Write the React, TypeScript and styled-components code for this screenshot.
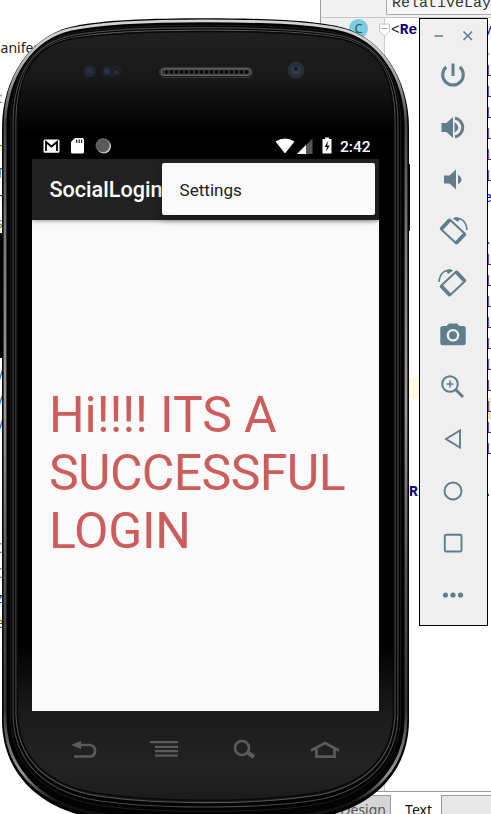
import React from "react";
import styled, { createGlobalStyle } from "styled-components";

const Global = createGlobalStyle`
  * { box-sizing: border-box; }
  body { margin: 0; background: #fff; overflow: hidden; }
`;

const slate = "#607d8b";

const Desktop = styled.div`
  position: relative;
  width: 491px;
  height: 814px;
  overflow: hidden;
  background: #fff;
`;

/* ---------- IDE behind the emulator ---------- */
const Ide = styled.div`
  display: flex;
  height: 814px;
`;

const ProjectPane = styled.div`
  width: 320px;
  height: 814px;
  overflow: hidden;
  display: flex;
  flex-direction: column;
  font: 14px/20px "Noto Sans", sans-serif;
  color: #222;
`;

const TreeLabel = styled.div`
  margin: 38px 0 0 -3px;
  height: 20px;
`;

const Fragments = styled.div`
  margin-top: 30px;
  width: 3px;
  height: 690px;
  overflow: hidden;
  display: flex;
  flex-direction: column;
`;

const Fragment = styled.span<{ $gap: number; $c: string }>`
  margin: ${(p) => p.$gap}px 0 0 -4px;
  height: 20px;
  color: ${(p) => p.$c};
  flex: none;
`;

const DarkEdge = styled.div`
  height: 125px;
  background: #000;
  flex: none;
`;

const Editor = styled.div`
  width: 171px;
  height: 814px;
  display: flex;
  flex-direction: column;
  font-family: "Liberation Mono", monospace;
`;

const Crumbs = styled.div`
  height: 18px;
  flex: none;
  display: flex;
  padding-left: 65px;
  background: #f2f2f2;
  border-left: 1px solid #999;
  border-bottom: 1px solid #c6c6c6;
`;

const Crumb = styled.div`
  flex: 1;
  height: 19px;
  margin-top: -4px;
  overflow: hidden;
  padding-left: 5px;
  background: #f7f7f7;
  border: 1px solid #aaa;
  border-top: 0;
  border-right: 0;
  border-radius: 0 0 0 2px;
  font-size: 15px;
  line-height: 15px;
  color: #333;
  white-space: nowrap;
`;

const CodeArea = styled.div`
  height: 773px;
  flex: none;
  display: flex;
`;

const Gutter = styled.div`
  width: 65px;
  display: flex;
  padding: 1px 0 0 28px;
  background: #f0f0f0;
  border-left: 1px solid #999;
  border-right: 1px solid #ccc;
`;

const ClassBadge = styled.div`
  width: 19px;
  height: 19px;
  border-radius: 50%;
  background: #7ccbe4;
  color: #35505a;
  font: 13px/19px "Noto Sans", sans-serif;
  text-align: center;
`;

const Code = styled.div`
  flex: 1;
  display: flex;
  flex-direction: column;
  padding-top: 2px;
  overflow: hidden;
`;

const Line = styled.div<{ $bg?: string; $first?: boolean }>`
  height: 21px;
  flex: none;
  display: flex;
  justify-content: space-between;
  padding-left: ${(p) => (p.$first ? 6 : 24)}px;
  background: ${(p) => p.$bg || "transparent"};
  color: #000080;
  font-size: 14.5px;
  font-weight: bold;
  line-height: 21px;
`;

const Tail = styled.span<{ $c: string }>`
  width: 4px;
  overflow: hidden;
  text-indent: -3.5px;
  color: ${(p) => p.$c};
  font-weight: normal;
`;

const Tag = styled.span`
  span { color: #222; font-weight: normal; }
`;

const FoldOverlay = styled.svg`
  position: absolute;
  left: 379px;
  top: 23px;
  width: 12px;
  height: 14px;
`;

const ModeTabs = styled.div`
  height: 23px;
  flex: none;
  display: flex;
  border-top: 1px solid #999;
  padding-top: 3px;
  background: #fff;
`;

const ModeTab = styled.div<{ $w: number; $on?: boolean }>`
  width: ${(p) => p.$w}px;
  height: 24px;
  padding-right: ${(p) => (p.$on ? 9 : 4)}px;
  text-align: right;
  font: 14px/${(p) => (p.$on ? 29 : 27)}px "Noto Sans", sans-serif;
  color: ${(p) => (p.$on ? "#111" : "#555")};
  background: ${(p) => (p.$on ? "#fff" : "#d5d5d5")};
  border-top: ${(p) => (p.$on ? "0" : "1px solid #999")};
  border-right: ${(p) => (p.$on ? "0" : "1px solid #999")};
`;

const TabRest = styled.div`
  flex: 1;
  background: #e7e7e7;
  border-top: 1px solid #999;
  border-left: 1px solid #999;
`;

/* ---------- Emulator device ---------- */
const Device = styled.div`
  position: absolute;
  left: 0;
  top: 0;
  width: 412px;
  height: 814px;
  padding: 133px 33px 0 32px;
`;

const Bezel = styled.svg`
  position: absolute;
  left: 0;
  top: 0;
`;

const Screen = styled.div`
  position: relative;
  width: 347px;
  height: 578px;
  background: #fafafa;
  font-family: Roboto, sans-serif;
  overflow: hidden;
`;

const StatusBar = styled.div`
  height: 26px;
  display: flex;
  align-items: center;
  justify-content: space-between;
  padding: 0 9px 0 11px;
  background: #000;
`;

const AppBar = styled.div`
  height: 61px;
  padding-left: 17.5px;
  background: #212121;
  color: #fff;
  font-size: 21.6px;
  font-weight: 500;
  line-height: 62px;
  box-shadow: 0 1px 4px rgba(0, 0, 0, 0.4);
`;

const Popup = styled.div`
  position: absolute;
  left: 130px;
  top: 30px;
  width: 213px;
  height: 52px;
  padding-left: 17.5px;
  background: #fafafa;
  border-radius: 2px;
  box-shadow: 0 4px 9px rgba(0, 0, 0, 0.35);
  color: #212121;
  font-size: 17.1px;
  line-height: 54px;
`;

const Message = styled.p`
  display: flex;
  flex-direction: column;
  margin: 166px 0 0 17px;
  color: #cd5c5c;
  font-size: 50px;
  line-height: 58px;
  white-space: pre;
`;

const MessageLine = styled.span<{ $track: number }>`
  letter-spacing: ${(p) => p.$track}px;
`;

/* ---------- Emulator tool strip ---------- */
const Tools = styled.div`
  position: absolute;
  left: 419px;
  top: 18px;
  width: 69px;
  height: 608px;
  background: #efefef;
  border: 1px solid #000;
`;

const WindowButtons = styled.div`
  height: 30px;
  display: flex;
  justify-content: space-between;
  align-items: center;
  padding: 3px 13.5px 0 14px;
`;

const ToolList = styled.div`
  display: flex;
  flex-direction: column;
  align-items: center;
  padding-right: 2px;
`;

const Tool = styled.div`
  width: 32px;
  height: 52px;
  display: flex;
  align-items: center;
  justify-content: center;
`;

/* Contours of the casing: blend from the outer edge (0) to the glass edge (1). */
const outerCurve = [205, 18.3, 150, 18.3, 100, 20, 70, 27, 30, 37, 2, 78, 2, 128, 2, 720, 2, 770, 35, 803, 80, 815, 110, 823, 150, 824, 205, 824];
const innerCurve = [205, 31, 160, 31, 110, 32, 75, 38, 36, 44, 17.5, 70, 17, 120, 17, 715, 19, 765, 55, 785, 90, 793, 125, 799, 160, 801, 205, 801];

const contour = (t: number) => {
  const v = outerCurve.map((o, i) => +(o + (innerCurve[i] - o) * t).toFixed(2));
  const pts: string[] = [];
  const mir: string[] = [];
  for (let i = 0; i < v.length; i += 2) {
    pts.push(`${v[i]} ${v[i + 1]}`);
    mir.push(`${411 - v[i]} ${v[i + 1]}`);
  }
  const m = mir.reverse();
  return `M${pts[0]}C${pts.slice(1, 7).join(" ")}L${pts[7]}C${pts.slice(8).join(" ")}L${m[0]}C${m.slice(1, 7).join(" ")}L${m[7]}C${m.slice(8).join(" ")}Z`;
};

const DeviceArt = () => (
  <Bezel width="412" height="814" viewBox="0 0 412 814">
    <defs>
      <linearGradient id="rim" x1="0" y1="0" x2="0" y2="814" gradientUnits="userSpaceOnUse">
        <stop offset="0" stopColor="#ddd" />
        <stop offset=".05" stopColor="#ccc" />
        <stop offset=".1" stopColor="#999" />
        <stop offset=".15" stopColor="#444" />
        <stop offset=".28" stopColor="#777" />
        <stop offset=".5" stopColor="#999" />
        <stop offset=".7" stopColor="#555" />
        <stop offset=".87" stopColor="#333" />
        <stop offset=".95" stopColor="#999" />
        <stop offset=".985" stopColor="#111" />
      </linearGradient>
      <linearGradient id="face" x1="0" y1="32" x2="0" y2="814" gradientUnits="userSpaceOnUse">
        <stop offset="0" stopColor="#202020" />
        <stop offset=".06" stopColor="#181818" />
        <stop offset=".13" stopColor="#000" />
        <stop offset=".78" stopColor="#000" />
        <stop offset=".87" stopColor="#1b1b1b" />
        <stop offset=".94" stopColor="#232323" />
        <stop offset="1" stopColor="#181818" />
      </linearGradient>
      <pattern id="mesh" width="5" height="5" patternUnits="userSpaceOnUse" x="164" y="69.5">
        <circle cx="2.5" cy="2.5" r="1.8" fill="#000" />
      </pattern>
    </defs>
    <rect x="405" y="164" width="5" height="67" rx="1" fill="#050505" />
    <path d={contour(0)} fill="#030303" />
    <path d={contour(0.2)} fill="none" stroke="url(#rim)" strokeWidth="2.8" />
    <path d={contour(0.56)} fill="none" stroke="#1c1c1c" strokeWidth="1" />
    <path d={contour(0.74)} fill="none" stroke="#484848" strokeWidth="1.2" />
    <path d={contour(0.93)} fill="url(#face)" stroke="#555" strokeWidth="1.1" />
    <path d={contour(1.03)} fill="none" stroke="#080808" strokeWidth="1.5" />
    <circle cx="89.5" cy="71" r="6" fill="#25262e" />
    <circle cx="89.5" cy="71" r="2.500" fill="#26304a" />
    <rect x="101.5" y="65.5" width="20" height="11" rx="5.5" fill="#202128" />
    <circle cx="107" cy="71" r="3" fill="#263250" />
    <circle cx="116.5" cy="72" r="1.5" fill="#303748" />
    <rect x="159.5" y="67.5" width="93" height="10" rx="4.5" fill="#1b1b1b" stroke="#373737" strokeWidth="1" />
    <rect x="161" y="68.8" width="90" height="6.5" rx="3" fill="#393939" stroke="#777" strokeWidth="1" />
    <rect x="163" y="69.5" width="86" height="5" fill="url(#mesh)" />
    <circle cx="296" cy="70" r="8.5" fill="#292d34" />
    <circle cx="296" cy="70" r="5" fill="#333946" />
    <circle cx="296" cy="68.5" r="2.2" fill="#1d222d" />
    <g fill="none" stroke="#5b5b5b" strokeWidth="2.7">
      <path d="M79 745H90Q95 746 95 750.5Q95 756.5 90 756.500H74" />
      <path d="M71 745L81 741V749Z" fill="#5b5b5b" stroke="none" />
      <path d="M150 742.2H178M155 746.8H178M155 751.2H178M155 755.6H178" strokeWidth="2.3" />
      <circle cx="242" cy="748" r="7" />
      <path d="M247 752L254 757" strokeWidth="4.5" />
      <path d="M311 750.5L325 743L339 750.5M316.5 749V756.7H334.5V749" />
    </g>
  </Bezel>
);

const StatusLeft = () => (
  <svg width="72" height="20" viewBox="43 136 72 20">
    <rect x="43.5" y="139.5" width="16" height="13.2" rx="1.5" fill="#fff" />
    <path d="M46 151V142L51.5 146.5L57 142V151" fill="none" stroke="#000" strokeWidth="1.8" />
    <path d="M75 138H82.500Q84 138 84 139.500V152Q84 153.500 82.500 153.500H72.500Q71 153.500 71 152V142Z" fill="#fff" />
    <path d="M76.7 139.5V143M79.2 139.5V143M81.6 139.5V143" stroke="#222" strokeWidth="1.2" />
    <circle cx="103.8" cy="146.3" r="7.2" fill="#ccc" />
    <circle cx="102.8" cy="145.4" r="6.800" fill="#5b5b5b" stroke="#8a8a8a" strokeDasharray="1 1" />
  </svg>
);

const StatusRight = () => (
  <svg width="95" height="20" viewBox="275 136 95 20">
    <path d="M275.5 141.5Q285 135.5 294.5 141.5L285 153.5Z" fill="#fff" />
    <path d="M297 154L312.5 138.5V154Z" fill="#555" />
    <path d="M297 154L306 145V154Z" fill="#fff" />
    <path d="M322.5 139H325V137.5H329V139H331.5V153.5H322.5Z" fill="#fff" />
    <path d="M328 141L324.5 147H327L326 151.5L329.7 145.5H327.2Z" fill="#000" />
    <text x="340" y="152" fill="#fff" fontFamily="Roboto, sans-serif" fontSize="15.5" fontWeight="500">2:42</text>
  </svg>
);

const Rotated = () => (
  <>
    <g transform="rotate(43 16 16.5)">
      <rect x="3.8" y="9" width="24.4" height="15" rx="2" fill={slate} />
      <rect x="7.6" y="11" width="16.8" height="11" fill="#efefef" />
    </g>
    <path d="M18 3Q29 3 30 15" fill="none" stroke={slate} strokeWidth="1.6" />
    <path d="M15.5 3.2Q19 1.5 23 3.4L21 7Z" fill={slate} />
  </>
);

const icons: React.ReactNode[] = [
  <g fill="none" stroke={slate} strokeWidth="3"><path d="M9.2 8A10.3 10.3 0 1 0 22.8 8M16 4.5V17" /></g>,
  <g><path d="M4.5 12H9.500L16 6V27L9.500 21H4.500Z" fill={slate} /><path d="M17.500 11Q25 16.500 17.500 22Z" fill={slate} /><path d="M18 7A9.700 9.700 0 0 1 18 26" fill="none" stroke={slate} strokeWidth="3" /></g>,
  <g fill={slate}><path d="M7 12.5H12.5L19 6.5V26.5L12.5 20.5H7Z" /><path d="M21 11.5Q28 16.5 21 21.5Z" /></g>,
  <Rotated />,
  <g transform="matrix(-1 0 0 1 32 0)"><Rotated /></g>,
  <g><path d="M5.5 7H9.5L12 4.500H20L22.500 7H26.500Q28.700 7 28.700 9V24Q28.700 26.200 26.500 26.200H5.500Q3.300 26.200 3.300 24V9Q3.300 7 5.500 7Z" fill={slate} /><circle cx="16" cy="16.2" r="6.3" fill="#efefef" /><circle cx="16" cy="16.2" r="4" fill={slate} /></g>,
  <g fill="none" stroke={slate} strokeWidth="2"><circle cx="13" cy="13" r="7.8" /><path d="M9.500 13H16.500M13 9.500V16.500" strokeWidth="1.5" /><path d="M18.5 18.500L26 26" strokeWidth="3" /></g>,
  <path d="M23 7.5V24.5L9 16Z" fill="none" stroke={slate} strokeWidth="1.9" />,
  <circle cx="16" cy="16" r="8.5" fill="none" stroke={slate} strokeWidth="1.9" />,
  <rect x="7.8" y="7.8" width="16.7" height="16.7" rx="1.3" fill="none" stroke={slate} strokeWidth="1.9" />,
  <g fill={slate}><circle cx="8.5" cy="16" r="2.6" /><circle cx="16" cy="16" r="2.6" /><circle cx="23.5" cy="16" r="2.6" /></g>,
];

const attribute = { tail: "l", c: "#660e7a" };
const codeLines: { tail: string; c: string; bg?: string }[] = [
  { tail: ".", c: "#d06030" },
  ...Array.from({ length: 6 }, () => attribute),
  { tail: "e", c: "#0000ff" },
  { tail: "", c: "#000" },
  { tail: ".", c: "#000080" },
  ...Array.from({ length: 6 }, () => attribute),
  { ...attribute, bg: "#fffae3" },
  { ...attribute, bg: "linear-gradient(90deg, #fff 90px, #f5e6b8 90px)" },
  attribute,
  attribute,
  { tail: "", c: "#000" },
];

const upperFragments: [string, number, string][] = [
  ["c", 0, "#b77a2c"], ["-", 5, "#3f9de0"], ["n", 5, "#8a5a10"],
  ["T", 5, "#555"], ["n", 5, "#5a3010"], ["s", 5, "#6b7a20"],
];
const lowerFragments: [string, number, string][] = [
  ["y", 5, "#225a9c"], ["y", 5, "#225a9c"], ["y", 5, "#225a9c"],
  ["C", 105, "#c57a3a"], ["C", 5, "#c57a3a"], ["z", 5, "#0a3b7c"], ["e", 5, "#8a5000"],
  ["-", 5, "#3f9de0"], ["l", 5, "#a87420"], ["i", 5, "#a87420"],
];

export default function App() {
  return (
    <Desktop>
      <Global />
      <Ide>
        <ProjectPane>
          <TreeLabel>lanifest</TreeLabel>
          <Fragments>
            {upperFragments.map(([t, g, c], i) => <Fragment key={i} $gap={g} $c={c}>{t}</Fragment>)}
            <DarkEdge />
            {lowerFragments.map(([t, g, c], i) => <Fragment key={i} $gap={g} $c={c}>{t}</Fragment>)}
          </Fragments>
        </ProjectPane>
        <Editor>
          <Crumbs><Crumb>RelativeLayout</Crumb></Crumbs>
          <CodeArea>
            <Gutter><ClassBadge>C</ClassBadge></Gutter>
            <Code>
              <Line $first><Tag><span>&lt;</span>Re</Tag><Tail $c="#0000ff">y</Tail></Line>
              {codeLines.map((l, i) => (
                <Line key={i} $bg={l.bg}><span /><Tail $c={l.c}>{l.tail}</Tail></Line>
              ))}
              <Line><span>R</span><Tail $c="#000080">.</Tail></Line>
            </Code>
          </CodeArea>
          <ModeTabs>
            <ModeTab $w={71}>Design</ModeTab>
            <ModeTab $w={50} $on>Text</ModeTab>
            <TabRest />
          </ModeTabs>
        </Editor>
      </Ide>

      <FoldOverlay viewBox="0 0 12 14">
        <path d="M0.5 1H10.5V8L5.5 13L0.5 8Z" fill="#fff" stroke="#c4c4c4" />
        <path d="M2.5 5.5H8.5" stroke="#aaa" />
      </FoldOverlay>

      <Device>
        <DeviceArt />
        <Screen>
          <StatusBar><StatusLeft /><StatusRight /></StatusBar>
          <AppBar>SocialLogin</AppBar>
          <Popup>Settings</Popup>
          <Message>
            <MessageLine $track={-0.1}>Hi!!!! ITS A</MessageLine>
            <MessageLine $track={-0.6}>SUCCESSFUL</MessageLine>
            <MessageLine $track={-0.3}>LOGIN</MessageLine>
          </Message>
        </Screen>
      </Device>

      <Tools>
        <WindowButtons>
          <svg width="10" height="12" viewBox="0 0 10 12"><path d="M0.5 6H9" stroke={slate} strokeWidth="1.5" /></svg>
          <svg width="12" height="12" viewBox="0 0 12 12"><path d="M1.5 1.5L10 10M10 1.5L1.5 10" stroke={slate} strokeWidth="1.6" /></svg>
        </WindowButtons>
        <ToolList>
          {icons.map((icon, i) => (
            <Tool key={i}><svg width="32" height="32" viewBox="0 0 32 32">{icon}</svg></Tool>
          ))}
        </ToolList>
      </Tools>
    </Desktop>
  );
}
